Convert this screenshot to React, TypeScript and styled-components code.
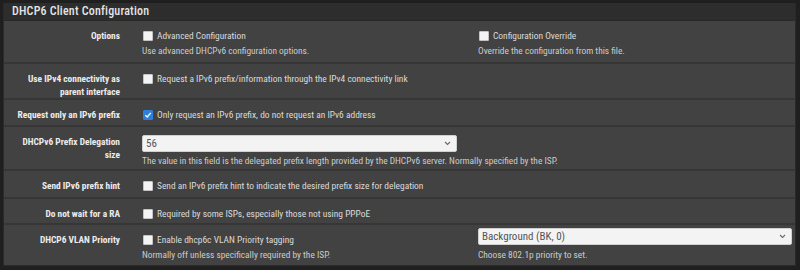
import React from "react";
import styled, { createGlobalStyle } from "styled-components";

const Global = createGlobalStyle`
  html, body { margin: 0; padding: 0; background: #1f1f1f; }
  body { font-family: "Roboto Condensed", Roboto, "Liberation Sans Narrow", sans-serif; }
`;

const Page = styled.div`
  width: 800px;
  height: 270px;
  box-sizing: border-box;
  padding: 3px 4px 0 3px;
  background: #1f1f1f;
  overflow: hidden;
`;

const Panel = styled.section`
  border-left: 1px solid #2a2a2a;
  border-right: 1px solid #2a2a2a;
  border-bottom: 1px solid #2a2a2a;
  background: #424242;
`;

const Heading = styled.h2`
  margin: 0;
  height: 18px;
  box-sizing: border-box;
  padding: 0 8px 1px 8px;
  display: flex;
  align-items: center;
  background: #2d2d2d;
  border-bottom: 1px solid #282828;
  color: #e4e4e4;
  font-size: 12px;
  font-weight: 500;
  letter-spacing: 0.2px;
`;

const Row = styled.div<{ $h: number }>`
  display: grid;
  grid-template-columns: 138px 1fr;
  height: ${(p) => p.$h}px;
  box-sizing: border-box;
  border-top: 2px solid #363636;
  &:first-of-type { border-top: none; }
`;

const Label = styled.div`
  text-align: right;
  padding: 8px 22px 0 12px;
  color: #ececec;
  font-weight: 700;
  font-size: 9.4px;
  line-height: 13px;
`;

const Controls = styled.div`
  display: grid;
  grid-template-columns: 315px 314px;
  column-gap: 21px;
  padding-top: 8px;
`;

const Cell = styled.div<{ $wide?: boolean }>`
  display: flex;
  flex-direction: column;
  min-width: 0;
  grid-column: ${(p) => (p.$wide ? "1 / 3" : "auto")};
`;

const CheckLine = styled.label`
  display: flex;
  align-items: center;
  gap: 4px;
  padding-left: 1px;
  color: #dadada;
  font-size: 9.45px;
  line-height: 14px;
  height: 14px;
  white-space: nowrap;
`;

const Box = styled.span<{ $checked?: boolean }>`
  flex: none;
  width: 10px;
  height: 10px;
  border-radius: 1px;
  box-sizing: border-box;
  background: ${(p) => (p.$checked ? "#2f7fd8" : "#f4f4f4")};
  border: 1px solid ${(p) => (p.$checked ? "#2f7fd8" : "#c4c4c4")};
  display: inline-flex;
  align-items: center;
  justify-content: center;
`;

const Help = styled.div<{ $gap?: number }>`
  color: #cbcbcb;
  font-size: 9.4px;
  line-height: 12px;
  margin-top: ${(p) => p.$gap ?? 2}px;
  white-space: nowrap;
`;

const Select = styled.div<{ $shift?: number }>`
  height: 17px;
  margin-top: ${(p) => p.$shift ?? 0}px;
  box-sizing: border-box;
  background: #f3f3f3;
  border: 1px solid #d0d0d0;
  border-radius: 2px;
  display: flex;
  align-items: center;
  justify-content: space-between;
  padding: 0 5px 0 3px;
  color: #555;
  font-size: 11px;
`;

const Chevron = () => (
  <svg width="7" height="5" viewBox="0 0 7 5">
    <path d="M1 1 L3.5 3.5 L6 1" fill="none" stroke="#6a6a6a" strokeWidth="1.1" />
  </svg>
);

const Check = ({ checked }: { checked?: boolean }) => (
  <Box $checked={checked}>
    {checked && (
      <svg width="8" height="8" viewBox="0 0 8 8">
        <path d="M1.3 4.1 L3.2 6 L6.8 1.8" fill="none" stroke="#fff" strokeWidth="1.3" />
      </svg>
    )}
  </Box>
);

export default function App() {
  return (
    <Page>
      <Global />
      <Panel>
        <Heading>DHCP6 Client Configuration</Heading>
        <Row $h={41}>
          <Label>Options</Label>
          <Controls>
            <Cell>
              <CheckLine><Check />Advanced Configuration</CheckLine>
              <Help>Use advanced DHCPv6 configuration options.</Help>
            </Cell>
            <Cell>
              <CheckLine><Check />Configuration Override</CheckLine>
              <Help>Override the configuration from this file.</Help>
            </Cell>
          </Controls>
        </Row>
        <Row $h={36}>
          <Label>Use IPv4 connectivity as parent interface</Label>
          <Controls>
            <Cell $wide>
              <CheckLine><Check />Request a IPv6 prefix/information through the IPv4 connectivity link</CheckLine>
            </Cell>
          </Controls>
        </Row>
        <Row $h={27}>
          <Label>Request only an IPv6 prefix</Label>
          <Controls>
            <Cell $wide>
              <CheckLine><Check checked />Only request an IPv6 prefix, do not request an IPv6 address</CheckLine>
            </Cell>
          </Controls>
        </Row>
        <Row $h={44}>
          <Label>DHCPv6 Prefix Delegation size</Label>
          <Controls>
            <Cell $wide>
              <Select style={{ width: 315 }}>56<Chevron /></Select>
              <Help $gap={3}>The value in this field is the delegated prefix length provided by the DHCPv6 server. Normally specified by the ISP.</Help>
            </Cell>
          </Controls>
        </Row>
        <Row $h={28}>
          <Label>Send IPv6 prefix hint</Label>
          <Controls>
            <Cell $wide>
              <CheckLine><Check />Send an IPv6 prefix hint to indicate the desired prefix size for delegation</CheckLine>
            </Cell>
          </Controls>
        </Row>
        <Row $h={26}>
          <Label>Do not wait for a RA</Label>
          <Controls>
            <Cell $wide>
              <CheckLine><Check />Required by some ISPs, especially those not using PPPoE</CheckLine>
            </Cell>
          </Controls>
        </Row>
        <Row $h={42}>
          <Label>DHCP6 VLAN Priority</Label>
          <Controls>
            <Cell>
              <CheckLine><Check />Enable dhcp6c VLAN Priority tagging</CheckLine>
              <Help>Normally off unless specifically required by the ISP.</Help>
            </Cell>
            <Cell>
              <Select $shift={-5}>Background (BK, 0)<Chevron /></Select>
              <Help $gap={4}>Choose 802.1p priority to set.</Help>
            </Cell>
          </Controls>
        </Row>
      </Panel>
    </Page>
  );
}
